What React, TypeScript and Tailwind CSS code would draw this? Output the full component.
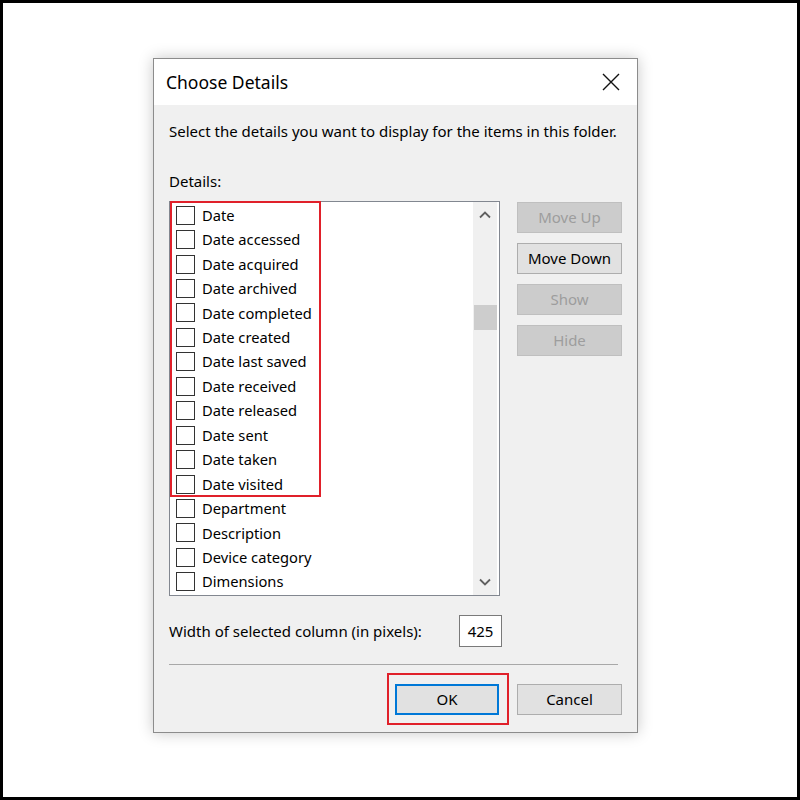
const items = [
  "Date",
  "Date accessed",
  "Date acquired",
  "Date archived",
  "Date completed",
  "Date created",
  "Date last saved",
  "Date received",
  "Date released",
  "Date sent",
  "Date taken",
  "Date visited",
  "Department",
  "Description",
  "Device category",
  "Dimensions",
];

const ui = { fontFamily: '"Noto Sans", "Open Sans", sans-serif' };
const list = { fontFamily: '"Noto Sans", "DejaVu Sans", sans-serif' };

function SideButton({ label, enabled = false }: { label: string; enabled?: boolean }) {
  return (
    <button
      type="button"
      className={
        enabled
          ? "h-[31px] w-[105px] border border-[#adadad] bg-[#e1e1e1] text-[15px] text-black"
          : "h-[31px] w-[105px] border border-[#bfbfbf] bg-[#cccccc] text-[15px] text-[#9d9d9d]"
      }
    >
      {label}
    </button>
  );
}

function Chevron({ down = false }: { down?: boolean }) {
  return (
    <svg width="12" height="8" viewBox="0 0 12 8" className="text-[#606060]">
      <path
        d={down ? "M1 1.5 L6 6.5 L11 1.5" : "M1 6.5 L6 1.5 L11 6.5"}
        fill="none"
        stroke="currentColor"
        strokeWidth="1.8"
      />
    </svg>
  );
}

export default function App() {
  return (
    <div className="h-[800px] w-[800px] border-[3px] border-black bg-white pl-[150px] pt-[55px]" style={ui}>
      <div className="flex h-[675px] w-[485px] flex-col border border-[#8c8c8c] bg-[#f0f0f0] shadow-[0_0_14px_rgba(0,0,0,0.22)]">
        {/* title bar */}
        <div className="flex h-[46px] shrink-0 items-center justify-between bg-white pl-[12px] pr-[17px]">
          <span className="text-[17.5px] text-black">Choose Details</span>
          <svg width="18" height="18" viewBox="0 0 18 18">
            <path d="M1 1 L17 17 M17 1 L1 17" stroke="#111" strokeWidth="1.4" fill="none" />
          </svg>
        </div>

        <div className="flex flex-col px-[15px] text-black">
          <p className="mt-[16px] h-5 text-[15px] leading-5">
            Select the details you want to display for the items in this folder.
          </p>
          <p className="mt-[30px] h-5 text-[15px] leading-5">Details:</p>

          <div className="mt-[10px] flex items-start gap-[17px]">
            {/* list */}
            <div className="relative flex h-[395px] w-[332px] border border-[#828790] bg-white" style={list}>
              <div className="flex flex-1 flex-col pt-[1px]">
                {items.map((it) => (
                  <div key={it} className="flex h-[24.45px] items-center gap-[7px] pl-[6px]">
                    <span className="h-[19px] w-[19px] border border-[#333] bg-white" />
                    <span className="text-[14.7px] leading-none">{it}</span>
                  </div>
                ))}
              </div>
              <div className="mr-[2px] flex w-[24px] flex-col items-center bg-[#f0f0f0]">
                <div className="flex h-[26px] items-center justify-center">
                  <Chevron />
                </div>
                <div className="mt-[77px] h-[25px] w-[23px] bg-[#cdcdcd]" />
                <div className="flex-1" />
                <div className="flex h-[26px] items-center justify-center">
                  <Chevron down />
                </div>
              </div>
              <div className="pointer-events-none absolute left-0 top-[-1px] h-[296px] w-[151px] border-2 border-[#e0202a]" />
            </div>

            {/* side buttons */}
            <div className="flex flex-col gap-[10px] pt-[1px]">
              <SideButton label="Move Up" />
              <SideButton label="Move Down" enabled />
              <SideButton label="Show" />
              <SideButton label="Hide" />
            </div>
          </div>

          <div className="mt-[19px] flex h-[32px] items-center">
            <span className="w-[290px] text-[15px]">Width of selected column (in pixels):</span>
            <div className="flex h-[32px] w-[43px] items-center justify-center border border-[#7a7a7a] bg-white text-[15px]">
              425
            </div>
          </div>

          <div className="mt-[17px] h-px w-[449px] bg-[#a8a8a8]" />

          <div className="mt-[19px] flex justify-end gap-[18px]">
            <div className="relative">
              <button
                type="button"
                className="h-[31px] w-[104px] border-2 border-[#0078d7] bg-[#e1e1e1] text-[15px] text-black"
              >
                OK
              </button>
              <div className="pointer-events-none absolute left-[-8px] top-[-11px] h-[52px] w-[122px] border-2 border-[#e0202a]" />
            </div>
            <button
              type="button"
              className="h-[31px] w-[105px] border border-[#adadad] bg-[#e1e1e1] text-[15px] text-black"
            >
              Cancel
            </button>
          </div>
        </div>
      </div>
    </div>
  );
}
